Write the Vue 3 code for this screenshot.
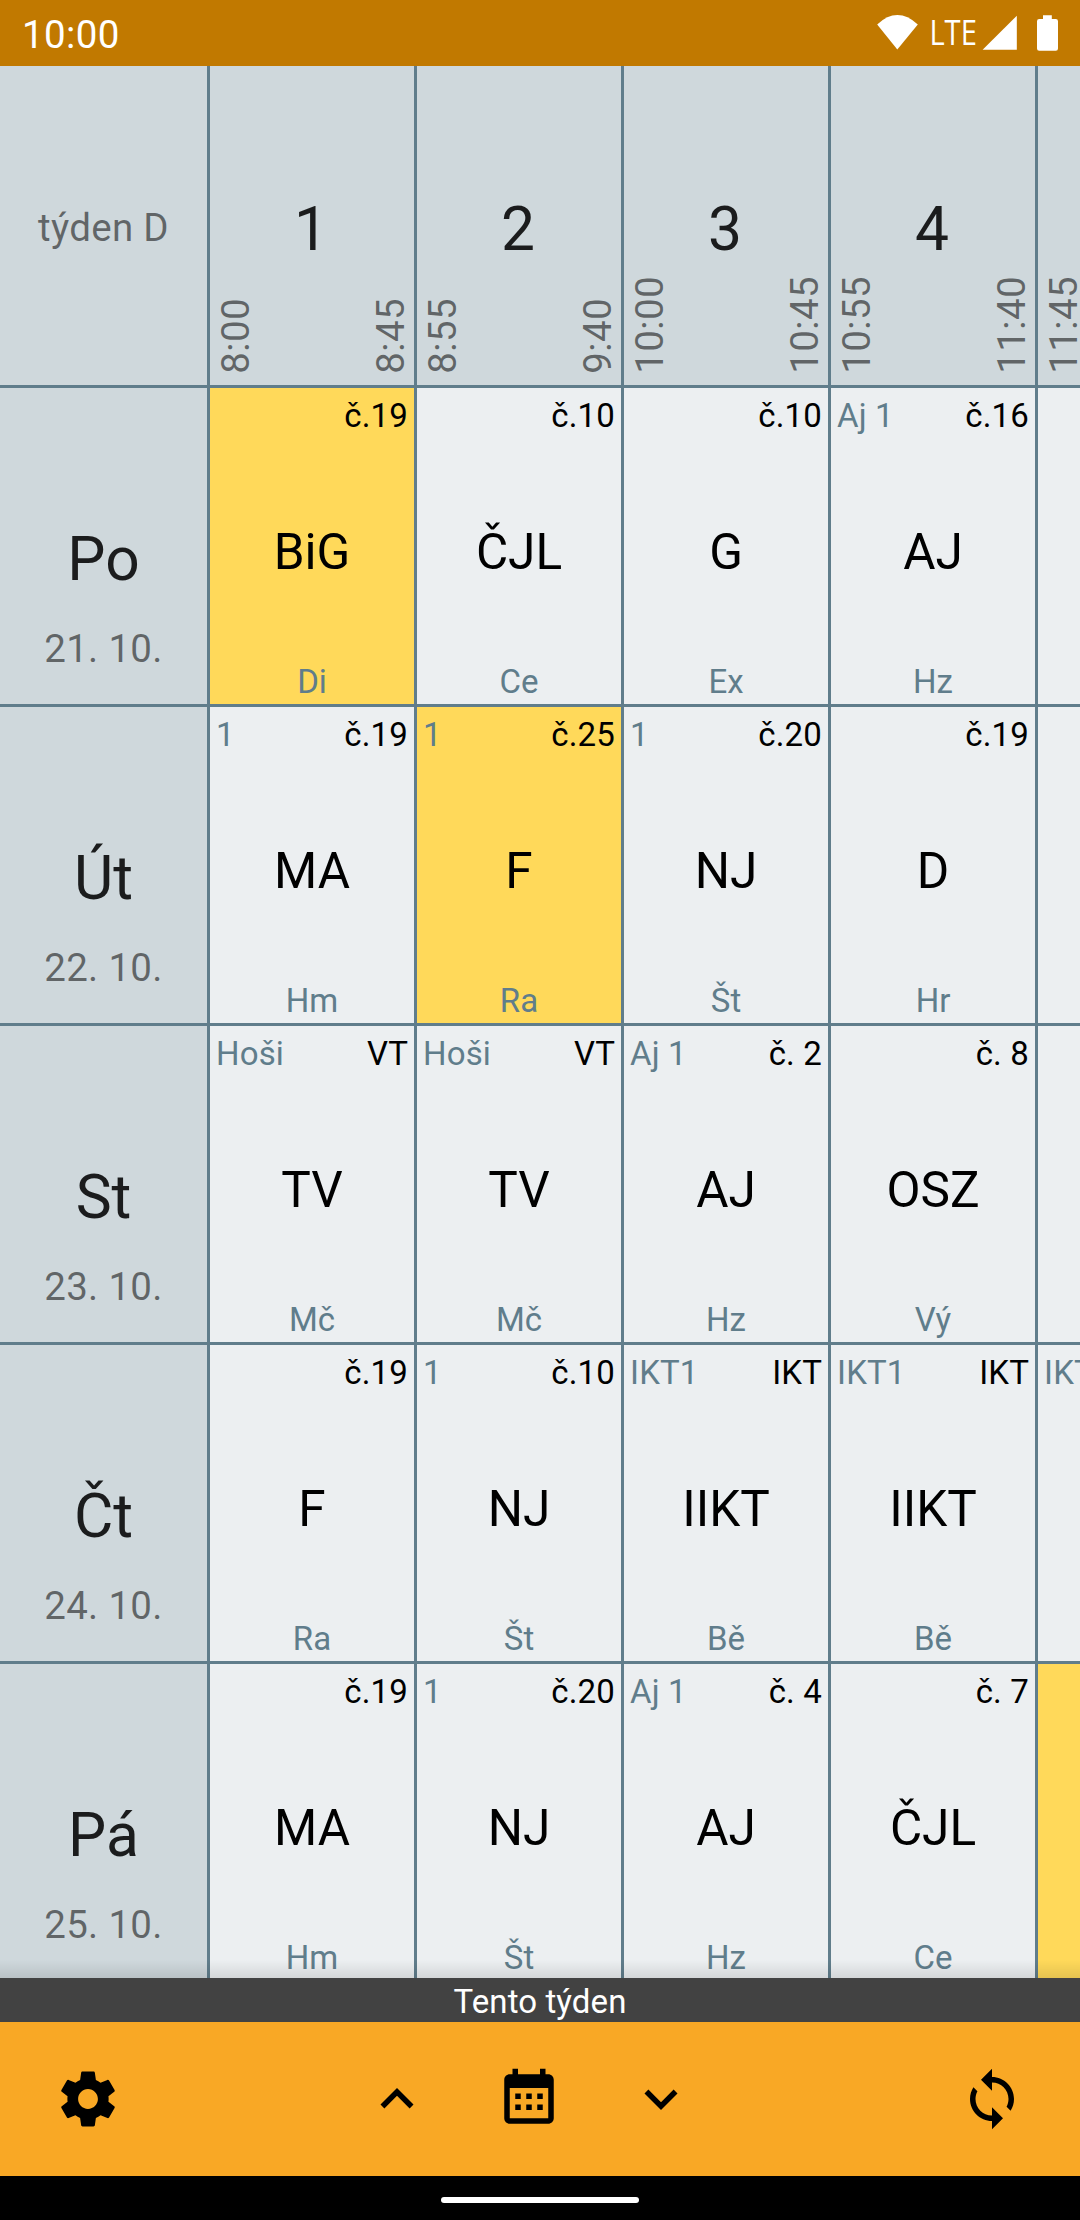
<script setup>
const hours = [
  { n: '1', from: '8:00', to: '8:45' },
  { n: '2', from: '8:55', to: '9:40' },
  { n: '3', from: '10:00', to: '10:45' },
  { n: '4', from: '10:55', to: '11:40' },
  { n: '', from: '11:45', to: '' },
]

const cell = (group, room, subject, teacher, changed = false) => ({ group, room, subject, teacher, changed })
const empty = (changed = false) => cell('', '', '', '', changed)

const days = [
  { name: 'Po', date: '21. 10.', cells: [
    cell('', 'č.19', 'BiG', 'Di', true), cell('', 'č.10', 'ČJL', 'Ce'),
    cell('', 'č.10', 'G', 'Ex'), cell('Aj 1', 'č.16', 'AJ', 'Hz'), empty() ] },
  { name: 'Út', date: '22. 10.', cells: [
    cell('1', 'č.19', 'MA', 'Hm'), cell('1', 'č.25', 'F', 'Ra', true),
    cell('1', 'č.20', 'NJ', 'Št'), cell('', 'č.19', 'D', 'Hr'), empty() ] },
  { name: 'St', date: '23. 10.', cells: [
    cell('Hoši', 'VT', 'TV', 'Mč'), cell('Hoši', 'VT', 'TV', 'Mč'),
    cell('Aj 1', 'č. 2', 'AJ', 'Hz'), cell('', 'č. 8', 'OSZ', 'Vý'), empty() ] },
  { name: 'Čt', date: '24. 10.', cells: [
    cell('', 'č.19', 'F', 'Ra'), cell('1', 'č.10', 'NJ', 'Št'),
    cell('IKT1', 'IKT', 'IIKT', 'Bě'), cell('IKT1', 'IKT', 'IIKT', 'Bě'), cell('IKT1', '', '', '') ] },
  { name: 'Pá', date: '25. 10.', cells: [
    cell('', 'č.19', 'MA', 'Hm'), cell('1', 'č.20', 'NJ', 'Št'),
    cell('Aj 1', 'č. 4', 'AJ', 'Hz'), cell('', 'č. 7', 'ČJL', 'Ce'), empty(true) ] },
]
</script>

<template>
  <div class="screen">
    <header class="status">
      <span class="clock">10:00</span>
      <svg class="status-icons" width="190" height="66" viewBox="0 0 190 66" fill="#fff">
        <path d="M7.200 24.400Q27.300 5.600 47.800 24.400L27.300 49.600Z" />
        <text x="59.400" y="44.600" font-size="34" textLength="47.500" lengthAdjust="spacingAndGlyphs">LTE</text>
        <path d="M146.800 15.800V49.800H112.600Z" />
        <path d="M173 15.200h8.800v3.800h4q2.200 0 2.200 2.200v27.400q0 2.200-2.200 2.200h-16.600q-2.200 0-2.200-2.200V21.200q0-2.200 2.200-2.200h3.800z" />
      </svg>
    </header>

    <main class="timetable">
      <div class="row head-row">
        <div class="corner">týden D</div>
        <div v-for="(h, i) in hours" :key="i" class="hour">
          <div class="hour-number">{{ h.n }}</div>
          <div class="times">
            <span class="time">{{ h.from }}</span>
            <span class="time">{{ h.to }}</span>
          </div>
        </div>
      </div>
      <div v-for="d in days" :key="d.name" class="row">
        <div class="day">
          <div class="day-name">{{ d.name }}</div>
          <div class="day-date">{{ d.date }}</div>
        </div>
        <div v-for="(c, i) in d.cells" :key="i" class="lesson" :class="{ changed: c.changed }">
          <div class="top"><span class="group">{{ c.group }}</span><span>{{ c.room }}</span></div>
          <div class="subject">{{ c.subject }}</div>
          <div class="teacher">{{ c.teacher }}</div>
        </div>
      </div>
      <div class="shade"></div>
    </main>

    <div class="week">Tento týden</div>

    <nav class="toolbar">
      <button class="action">
        <svg viewBox="0 0 24 24"><path d="M19.43 12.98c.04-.32.07-.64.07-.98s-.03-.66-.07-.98l2.11-1.65c.19-.15.24-.42.12-.64l-2-3.46c-.12-.22-.39-.3-.61-.22l-2.49 1c-.52-.4-1.08-.73-1.69-.98l-.38-2.65C14.46 2.18 14.25 2 14 2h-4c-.25 0-.46.18-.49.42l-.38 2.65c-.61.25-1.17.59-1.69.98l-2.49-1c-.23-.09-.49 0-.61.22l-2 3.46c-.13.22-.07.49.12.64l2.11 1.65c-.04.32-.07.65-.07.98s.03.66.07.98l-2.11 1.65c-.19.15-.24.42-.12.64l2 3.46c.12.22.39.3.61.22l2.49-1c.52.4 1.08.73 1.69.98l.38 2.65c.03.24.24.42.49.42h4c.25 0 .46-.18.49-.42l.38-2.65c.61-.25 1.17-.59 1.69-.98l2.49 1c.23.09.49 0 .61-.22l2-3.46c.12-.22.07-.49-.12-.64l-2.11-1.65zM12 15.6c-1.98 0-3.6-1.62-3.6-3.6s1.62-3.6 3.6-3.6 3.6 1.62 3.6 3.6-1.62 3.6-3.6 3.6z" /></svg>
      </button>
      <div class="week-nav">
        <button class="action">
          <svg viewBox="0 0 24 24"><path d="M12 8l-6 6 1.41 1.41L12 10.83l4.59 4.58L18 14z" /></svg>
        </button>
        <button class="action">
          <svg viewBox="0 0 24 24"><path fill-rule="evenodd" d="M19 3h-1V1h-2v2H8V1H6v2H5c-1.11 0-2 .9-2 2v14c0 1.1.89 2 2 2h14c1.1 0 2-.9 2-2V5c0-1.1-.9-2-2-2zm0 16H5V8h14v11zM7 10h2v2H7zM11 10h2v2h-2zM15 10h2v2h-2zM7 14h2v2H7zM11 14h2v2h-2zM15 14h2v2h-2z" /></svg>
        </button>
        <button class="action">
          <svg viewBox="0 0 24 24"><path d="M16.59 8.59L12 13.17 7.41 8.59 6 10l6 6 6-6z" /></svg>
        </button>
      </div>
      <button class="action">
        <svg viewBox="0 0 24 24"><path d="M12 4V1L8 5l4 4V6c3.31 0 6 2.69 6 6 0 1.01-.25 1.97-.7 2.8l1.46 1.46C19.54 15.03 20 13.57 20 12c0-4.42-3.58-8-8-8zm0 14c-3.31 0-6-2.69-6-6 0-1.01.25-1.97.7-2.8L5.24 7.74C4.46 8.97 4 10.43 4 12c0 4.42 3.58 8 8 8v3l4-4-4-4v3z" /></svg>
      </button>
    </nav>

    <footer class="system-nav"><div class="pill"></div></footer>
  </div>
</template>

<style>
body { margin: 0; background: #000; }
</style>

<style scoped>
.screen {
  width: 1080px;
  height: 2220px;
  display: flex;
  flex-direction: column;
  overflow: hidden;
  font-family: Roboto, sans-serif;
  color: #000;
}
.status {
  flex: none;
  height: 66px;
  box-sizing: border-box;
  padding: 0 20px 0 22px;
  display: flex;
  align-items: center;
  justify-content: space-between;
  background: #c17900;
  color: #fff;
}
.clock { font-size: 38.5px; line-height: 46px; padding-top: 3px; letter-spacing: 0.35px; }
.status-icons { display: block; font-family: "Open Sans", sans-serif; font-weight: 400; }
.timetable {
  position: relative;
  flex: none;
  height: 1912px;
  overflow: hidden;
}
.row {
  display: grid;
  grid-template-columns: 210px repeat(5, 207px);
  height: 319px;
}
.head-row { height: 322px; }
.row > div {
  box-sizing: border-box;
  border-right: 3px solid #607d8b;
  border-bottom: 3px solid #607d8b;
  overflow: hidden;
}
.corner, .hour, .day { background: #cfd8dc; }
.corner {
  display: flex;
  align-items: center;
  justify-content: center;
  padding-top: 3px;
  font-size: 38.5px;
  letter-spacing: 0.3px;
  color: rgba(0, 0, 0, 0.54);
}
.hour { display: flex; flex-direction: column; justify-content: space-between; }
.hour-number {
  height: 70px;
  line-height: 70px;
  margin-top: 129px;
  padding-right: 2px;
  text-align: center;
  font-size: 60.5px;
  color: rgba(0, 0, 0, 0.87);
}
.times {
  display: flex;
  justify-content: space-between;
  align-items: flex-end;
  padding: 0 1px 11px 3px;
}
.time {
  writing-mode: vertical-rl;
  transform: rotate(180deg);
  font-size: 38.5px;
  line-height: 45px;
  letter-spacing: 0.35px;
  white-space: nowrap;
  color: rgba(0, 0, 0, 0.54);
}
.day { text-align: center; }
.day-name { margin-top: 137px; font-size: 60.5px; line-height: 70px; color: rgba(0, 0, 0, 0.87); }
.day-date { margin-top: 31px; font-size: 38.5px; line-height: 45px; letter-spacing: 0.3px; color: rgba(0, 0, 0, 0.54); }
.lesson {
  display: flex;
  flex-direction: column;
  justify-content: space-between;
  background: #eceff1;
}
.lesson.changed { background: #ffd95a; }
.top {
  display: flex;
  justify-content: space-between;
  height: 39px;
  padding: 8px 6px 0;
  font-size: 33px;
  line-height: 39px;
  letter-spacing: 0.15px;
  white-space: nowrap;
}
.group, .teacher { color: #607d8b; }
.subject { height: 58px; line-height: 58px; padding-top: 6px; margin-bottom: -1px; font-size: 49.5px; text-align: center; }
.teacher { height: 39px; line-height: 39px; padding-bottom: 3px; font-size: 33px; text-align: center; }
.shade {
  position: absolute;
  left: 0;
  right: 0;
  bottom: 0;
  height: 18px;
  background: linear-gradient(to bottom, rgba(0, 0, 0, 0), rgba(0, 0, 0, 0.1));
}
.week {
  flex: none;
  height: 44px;
  line-height: 48px;
  text-align: center;
  font-size: 33px;
  letter-spacing: 0.1px;
  color: #fff;
  background: #424242;
}
.toolbar {
  flex: none;
  height: 154px;
  box-sizing: border-box;
  padding: 0 22px;
  display: grid;
  grid-template-columns: 132px 1fr 132px;
  align-items: center;
  background: #f9a825;
}
.week-nav { display: flex; padding-left: 177px; }
.action {
  width: 132px;
  height: 132px;
  padding: 0;
  border: 0;
  background: none;
  display: flex;
  align-items: center;
  justify-content: center;
}
.action svg { width: 66px; height: 66px; fill: #000; }
.system-nav {
  flex: none;
  height: 44px;
  box-sizing: border-box;
  padding-top: 4px;
  display: flex;
  align-items: center;
  justify-content: center;
  background: #000;
}
.pill { width: 198px; height: 6px; border-radius: 3px; background: #fff; }
</style>
